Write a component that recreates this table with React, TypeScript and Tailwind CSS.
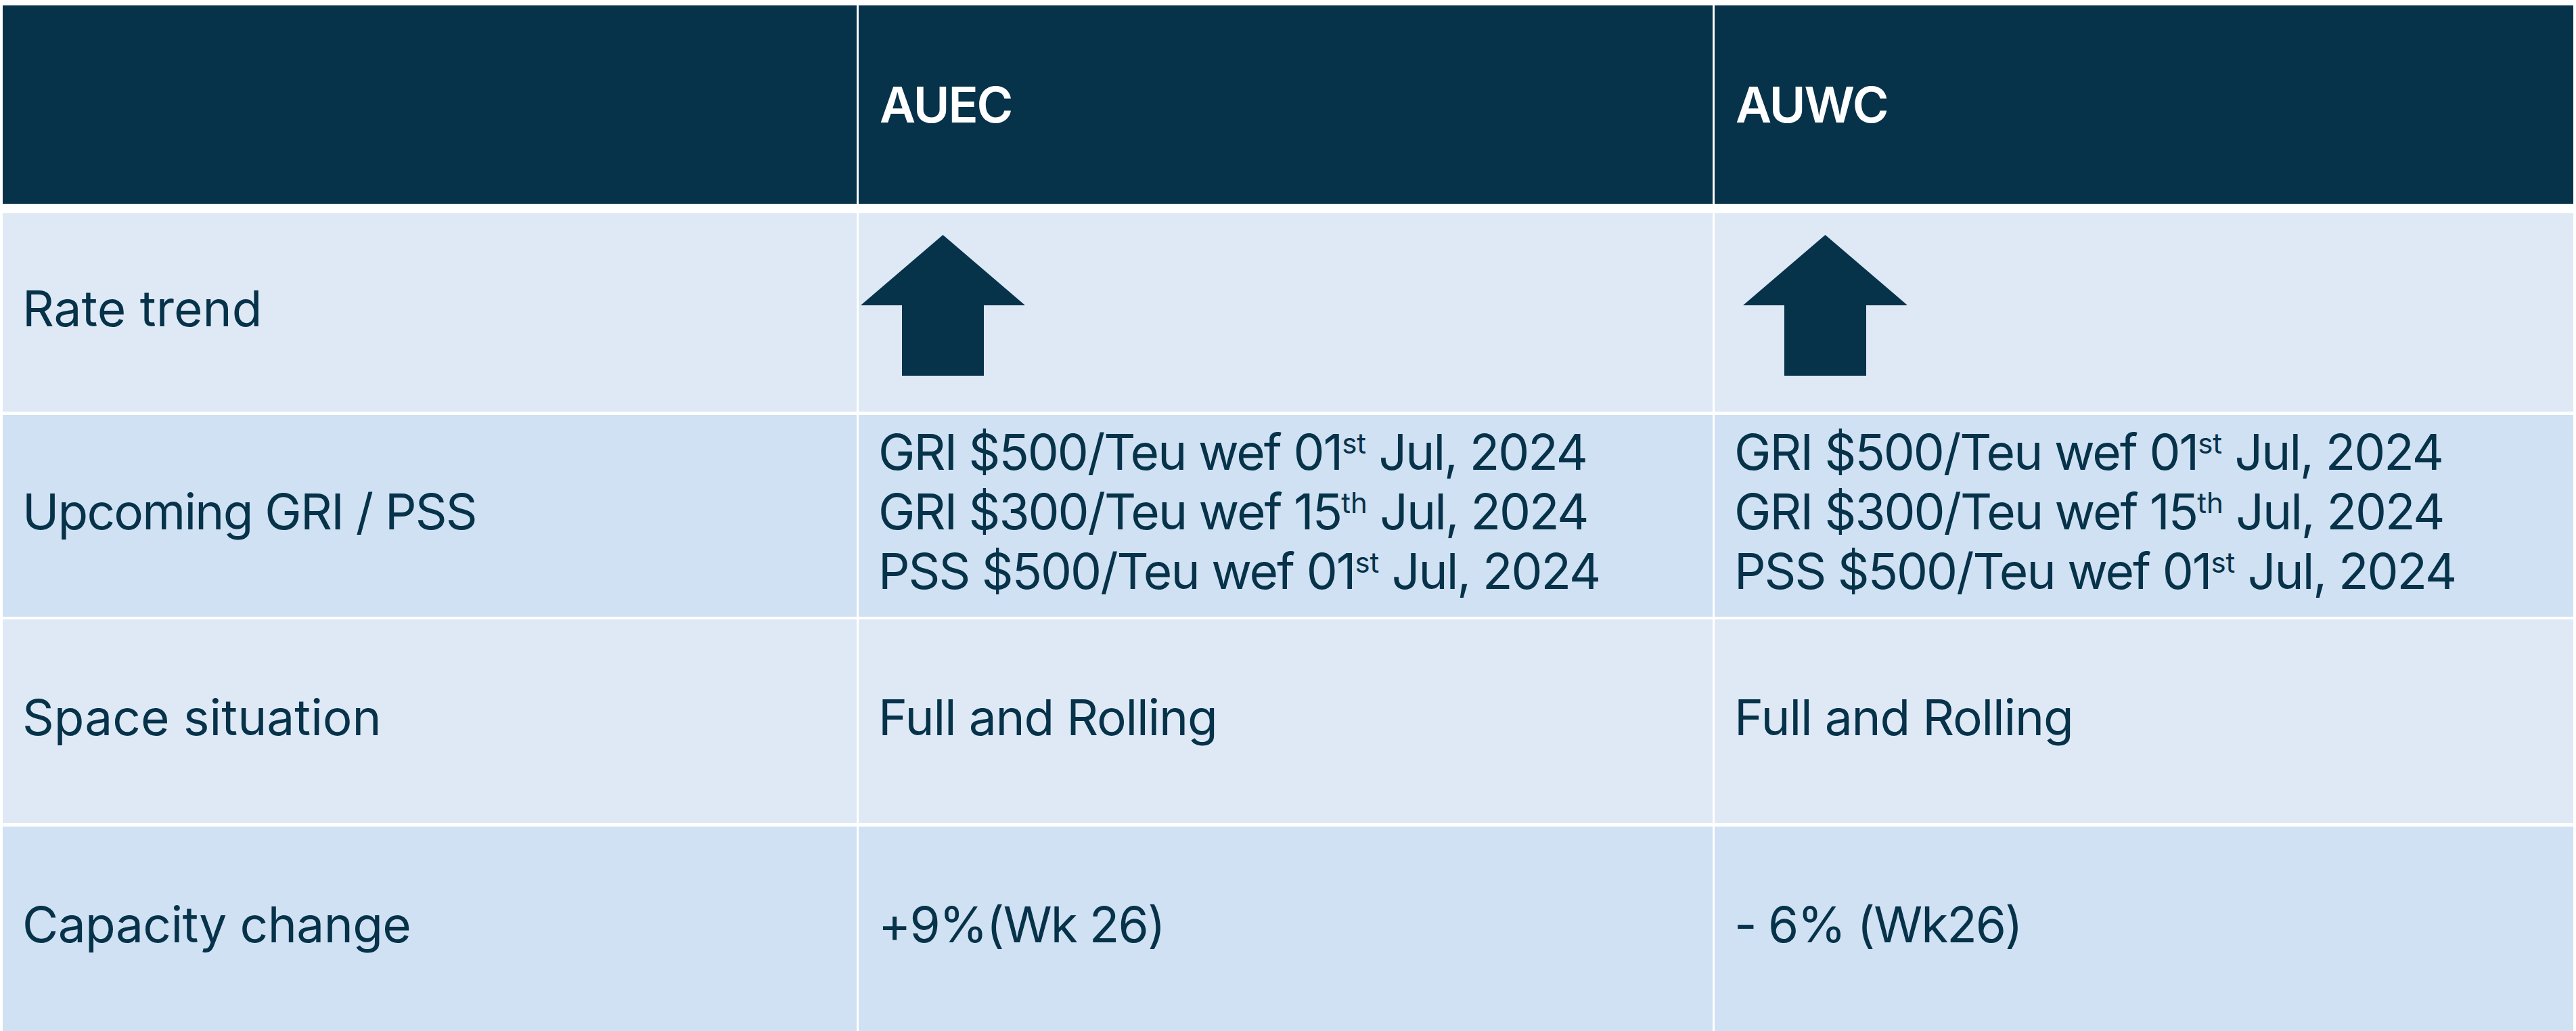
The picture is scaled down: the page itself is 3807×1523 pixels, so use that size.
const ink = "text-[#06324a]"

const rows = [
  {
    label: "Rate trend",
    bg: "bg-[#dee9f5]",
    height: "h-[293px] mt-[14px]",
    track: "tracking-[0px]",
  },
  {
    label: "Upcoming GRI / PSS",
    bg: "bg-[#cfe1f2]",
    height: "h-[298px] mt-[5px]",
    track: "tracking-[-1.8px]",
  },
  {
    label: "Space situation",
    bg: "bg-[#dee9f5]",
    height: "h-[301px] mt-[4px]",
    track: "tracking-[0px]",
  },
  {
    label: "Capacity change",
    bg: "bg-[#cfe1f2]",
    height: "h-[302px] mt-[5px]",
    track: "tracking-[-0.6px]",
  },
]

const UpArrow = () => (
  <svg width="243" height="208" viewBox="0 0 243 208" className="block">
    <polygon points="121.5,0 243,104 182,104 182,208 61,208 61,104 0,104" fill="#06324a" />
  </svg>
)

const Sup = ({ children }: { children: React.ReactNode }) => (
  <sup className="relative -top-[24px] align-baseline text-[42px] leading-none tracking-[0px]">{children}</sup>
)

const GriLines = () => (
  <div className="text-[73px] leading-[88px] tracking-[-2px]">
    <div>
      GRI $500/Teu wef 01<Sup>st</Sup> Jul, 2024
    </div>
    <div>
      GRI $300/Teu wef 15<Sup>th</Sup> Jul, 2024
    </div>
    <div>
      PSS $500/Teu wef 01<Sup>st</Sup> Jul, 2024
    </div>
  </div>
)

const cells: Record<string, [React.ReactNode, React.ReactNode]> = {
  "Rate trend": [
    <div className="pl-[3px] pt-[32px] self-start">
      <UpArrow />
    </div>,
    <div className="pl-[42px] pt-[32px] self-start">
      <UpArrow />
    </div>,
  ],
  "Upcoming GRI / PSS": [<GriLines />, <GriLines />],
  "Space situation": [
    <span className="text-[73px] leading-[88px] tracking-[-1.2px]">Full and Rolling</span>,
    <span className="text-[73px] leading-[88px] tracking-[-1.2px]">Full and Rolling</span>,
  ],
  "Capacity change": [
    <span className="text-[73px] leading-[88px] tracking-[-1.8px]">+9%(Wk 26)</span>,
    <span className="text-[73px] leading-[88px] tracking-[-2px]">- 6% (Wk26)</span>,
  ],
}

export default function App() {
  return (
    <div
      className={`w-[3807px] h-[1523px] overflow-hidden bg-white pt-[8px] pl-[4px] ${ink}`}
      style={{ fontFamily: "Inter, 'Noto Sans', sans-serif" }}
    >
      {/* header */}
      <div className="grid grid-cols-[1262px_1262px_1269px] gap-x-[3px] h-[293px]">
        <div className="bg-[#06324a]" />
        <div className="bg-[#06324a] flex items-center pl-[31px]">
          <span className="text-white font-semibold text-[73px] leading-none tracking-[-2px]">AUEC</span>
        </div>
        <div className="bg-[#06324a] flex items-center pl-[31px]">
          <span className="text-white font-semibold text-[73px] leading-none tracking-[-2px]">AUWC</span>
        </div>
      </div>

      {rows.map((row) => {
        const [a, b] = cells[row.label]
        const isArrow = row.label === "Rate trend"
        return (
          <div key={row.label} className={`grid grid-cols-[1262px_1262px_1269px] gap-x-[3px] ${row.height}`}>
            <div className={`${row.bg} flex items-center pl-[29px] pb-[12px]`}>
              <span className={`text-[73px] leading-[88px] ${row.track}`}>{row.label}</span>
            </div>
            <div className={`${row.bg} flex ${isArrow ? "items-start" : "items-center pl-[29px] pb-[12px]"}`}>{a}</div>
            <div className={`${row.bg} flex ${isArrow ? "items-start" : "items-center pl-[29px] pb-[12px]"}`}>{b}</div>
          </div>
        )
      })}
    </div>
  )
}
